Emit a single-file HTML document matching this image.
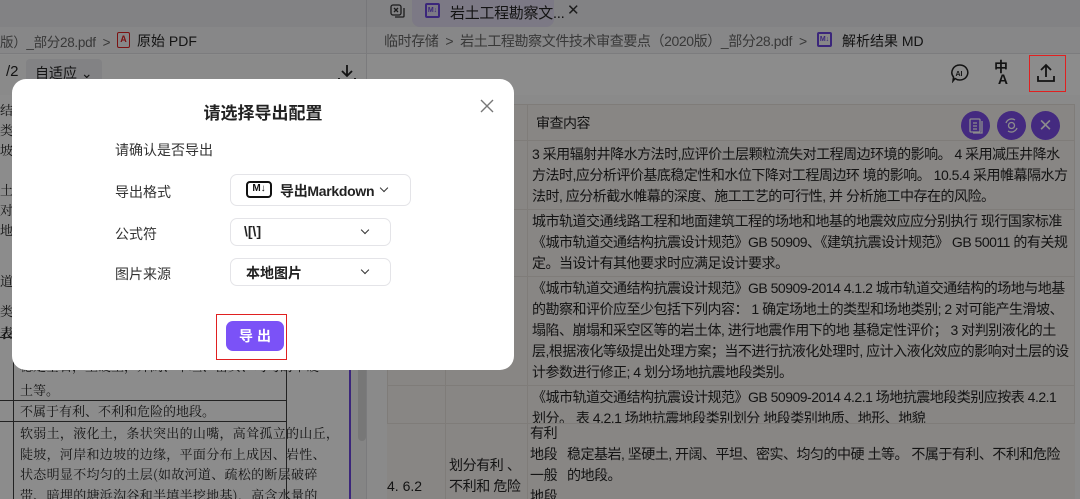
<!DOCTYPE html>
<html><head><meta charset="utf-8"><style>
*{margin:0;padding:0;box-sizing:border-box}
html,body{width:1080px;height:499px;overflow:hidden}
body{position:relative;font-family:"Liberation Sans","Noto Sans CJK SC",sans-serif;font-size:14px;color:#131313;background:#8c8c8c}
.a{position:absolute;white-space:nowrap}
.rt{position:absolute;left:387px;top:104px;width:688px;border-collapse:collapse;font-size:14px;line-height:21px;color:#131313;background:#888684;letter-spacing:-0.5px}
.rt td{border:1px solid #7f7c79;vertical-align:top;padding:1px 4px 2px}
.lp{font-family:"Noto Serif CJK SC","Liberation Serif",serif;font-size:13px;line-height:26px;color:#131313}
.sel{position:absolute;border:1px solid #e4e4e8;border-radius:7px;background:#fff}
.chev{position:absolute;width:6px;height:6px;border-right:1.3px solid #333;border-bottom:1.3px solid #333;transform:rotate(45deg)}
</style></head><body>
<div class="a" style="left:0;top:0;width:1080px;height:27px;background:#828284"></div>
<div class="a" style="left:366px;top:0;width:1px;height:27px;background:#77777a"></div>
<div class="a" style="left:412px;top:0;width:142px;height:27px;background:#7c7985;border-radius:0 0 8px 8px"></div>
<svg class="a" style="left:389px;top:3px" width="18" height="18" viewBox="0 0 18 18" fill="none" stroke="#1c1c1c" stroke-width="1.3"><rect x="2" y="2" width="10" height="10" rx="2"/><path d="M5 5l4 4M9 5l-4 4M6 14h8a1 1 0 0 0 1-1V5"/></svg>
<div class="a" style="left:425px;top:3px;width:15px;height:15px;border:2px solid #3b267b;border-radius:2px;font-size:7px;color:#3b267b;font-weight:bold;line-height:11px;text-align:center">M↓</div>
<div class="a" style="left:450px;top:2px;font-size:15px;color:#131313;letter-spacing:-0.3px">岩土工程勘察文...</div>
<div class="a" style="left:567px;top:1px;font-size:15px;color:#1c1c1c">✕</div>
<div class="a" style="left:0;top:27px;width:1080px;height:27px;background:#878788;border-bottom:1px solid #7c7c7e"></div>
<div class="a" style="left:0;top:31px;color:#383838;font-size:13.5px;letter-spacing:-0.3px">版）_部分28.pdf &nbsp;&gt;</div>
<div class="a" style="left:117px;top:32px;width:13px;height:16px;border:1.6px solid #7b1212;border-radius:2px;color:#7b1212;font-size:9px;line-height:13px;text-align:center;font-weight:bold">A</div>
<div class="a" style="left:137px;top:31px;color:#131313">原始 PDF</div>
<div class="a" style="left:366px;top:27px;width:1px;height:472px;background:#7b7b7d"></div>
<div class="a" style="left:384px;top:31px;color:#383838;letter-spacing:-0.4px">临时存储 &nbsp;&gt;&nbsp; 岩土工程勘察文件技术审查要点（2020版）_部分28.pdf &nbsp;&gt;</div>
<div class="a" style="left:817px;top:32px;width:15px;height:15px;border:2px solid #3b267b;border-radius:2px;font-size:7px;color:#3b267b;font-weight:bold;line-height:11px;text-align:center">M↓</div>
<div class="a" style="left:842px;top:31px;color:#131313">解析结果 MD</div>
<div class="a" style="left:0;top:55px;width:366px;height:40px;background:#8a8a8a"></div>
<div class="a" style="left:367px;top:55px;width:713px;height:40px;background:#8c8c8c"></div>
<div class="a" style="left:6px;top:63px;font-size:15px">/2</div>
<div class="a" style="left:26px;top:59px;width:76px;height:28px;background:#828284;border-radius:4px;padding:6px 9px;font-size:14px;line-height:16px">自适应 ⌄</div>
<svg class="a" style="left:336px;top:62px" width="22" height="22" viewBox="0 0 22 22" fill="none" stroke="#131313" stroke-width="1.8"><path d="M11 3v11M6 9l5 5 5-5M3 16v3h16v-3"/></svg>
<svg class="a" style="left:950px;top:63px" width="20" height="20" viewBox="0 0 20 20" fill="none" stroke="#131313" stroke-width="1.5"><path d="M10 2a8 7.5 0 1 1-5 13.5L3 18l.5-4A8 7.5 0 0 1 10 2z"/><text x="5.5" y="13" font-size="7" font-family="Liberation Sans" fill="#131313" stroke="none" font-weight="bold">AI</text></svg>
<div class="a" style="left:994px;top:61px;font-size:14px;font-weight:bold;line-height:12px">中<br>&nbsp;A</div>
<svg class="a" style="left:1035px;top:62px" width="22" height="22" viewBox="0 0 22 22" fill="none" stroke="#131313" stroke-width="1.8"><path d="M11 15V4M6 8l5-5 5 5M3 14v5h16v-5"/></svg>
<div class="a" style="left:1029px;top:55px;width:37px;height:37px;border:1.5px solid #e02020"></div>
<div class="a" style="left:0;top:95px;width:366px;height:404px;background:#858585"></div>
<div class="a" style="left:0;top:95px;width:350px;height:404px;background:#8c8c8c"></div>
<div class="a" style="left:349px;top:360px;width:2px;height:139px;background:#3b267b"></div>
<div class="a" style="left:358px;top:96px;width:8px;height:345px;background:#777;border-radius:4px"></div>
<div class="a lp" style="left:0;top:100px;line-height:20px">结<br>类<br>坡<br><br>土<br>对<br>地</div>
<div class="a lp" style="left:0;top:268px">道</div>
<div class="a lp" style="left:0;top:298px">类</div>
<div class="a lp" style="left:0;top:320px;font-weight:bold">表</div>
<div class="a" style="left:0;top:337px;width:286px;height:1px;background:#222"></div>
<div class="a" style="left:0;top:400px;width:286px;height:1px;background:#222"></div>
<div class="a" style="left:0;top:421px;width:286px;height:1px;background:#222"></div>
<div class="a" style="left:13px;top:337px;width:1px;height:162px;background:#222"></div>
<div class="a" style="left:286px;top:337px;width:1px;height:162px;background:#222"></div>
<div class="a lp" style="left:20px;top:354px;line-height:24px">稳定基岩，坚硬土，开阔、平坦、密实、均匀的中硬<br>土等。</div>
<div class="a lp" style="left:20px;top:400px;line-height:22px">不属于有利、不利和危险的地段。</div>
<div class="a lp" style="left:20px;top:423px;line-height:20.5px;letter-spacing:0.3px">软弱土，液化土，条状突出的山嘴，高耸孤立的山丘，<br>陡坡，河岸和边坡的边缘，平面分布上成因、岩性、<br>状态明显不均匀的土层(如故河道、疏松的断层破碎<br>带、暗埋的塘浜沟谷和半填半挖地基)，高含水量的</div>
<div class="a" style="left:367px;top:95px;width:713px;height:404px;background:#8a8a8a"></div>
<table class="rt">
<tr style="height:36px"><td style="width:58px"></td><td style="width:82px"></td><td style="padding-top:8px;padding-left:8px">审查内容</td></tr>
<tr><td></td><td></td><td style="padding-top:3px">3 采用辐射井降水方法时,应评价土层颗粒流失对工程周边环境的影响。 4 采用减压井降水方法时,应分析评价基底稳定性和水位下降对工程周边环 境的影响。 10.5.4 采用帷幕隔水方法时, 应分析截水帷幕的深度、施工工艺的可行性, 并 分析施工中存在的风险。</td></tr>
<tr><td></td><td></td><td>城市轨道交通线路工程和地面建筑工程的场地和地基的地震效应应分别执行 现行国家标准《城市轨道交通结构抗震设计规范》GB 50909、《建筑抗震设计规范》 GB 50011 的有关规定。当设计有其他要求时应满足设计要求。</td></tr>
<tr><td></td><td></td><td>《城市轨道交通结构抗震设计规范》GB 50909-2014 4.1.2 城市轨道交通结构的场地与地基的勘察和评价应至少包括下列内容： 1 确定场地土的类型和场地类别; 2 对可能产生滑坡、塌陷、崩塌和采空区等的岩土体, 进行地震作用下的地 基稳定性评价； 3 对判别液化的土层,根据液化等级提出处理方案；当不进行抗液化处理时, 应计入液化效应的影响对土层的设计参数进行修正; 4 划分场地抗震地段类别。</td></tr>
<tr><td></td><td></td><td>《城市轨道交通结构抗震设计规范》GB 50909-2014 4.2.1 场地抗震地段类别应按表 4.2.1 划分。 表 4.2.1 场地抗震地段类别划分 地段类别地质、地形、地貌</td></tr>
</table>
<div class="a" style="left:387px;top:423px;width:688px;height:76px;background:#888684;border-top:1px solid #7f7c79"></div>
<div class="a" style="left:445px;top:423px;width:1px;height:76px;background:#7f7c79"></div>
<div class="a" style="left:527px;top:423px;width:1px;height:76px;background:#7f7c79"></div>
<div class="a" style="left:387px;top:476px;line-height:21px">4. 6.2</div>
<div class="a" style="left:449px;top:455px;line-height:21px;letter-spacing:-0.4px">划分有利 、<br>不利和 危险</div>
<div class="a" style="left:530px;top:423px;line-height:21px;letter-spacing:-0.4px">有利<br>地段<br>一般<br>地段</div>
<div class="a" style="left:567px;top:444px;line-height:21px;letter-spacing:-0.5px">稳定基岩, 坚硬土, 开阔、平坦、密实、均匀的中硬 土等。 不属于有利、不利和危险<br>的地段。</div>
<div class="a" style="left:961px;top:111px;width:29px;height:29px;border-radius:50%;background:#442a80"></div>
<div class="a" style="left:997px;top:111px;width:29px;height:29px;border-radius:50%;background:#442a80"></div>
<div class="a" style="left:1031px;top:111px;width:29px;height:29px;border-radius:50%;background:#442a80;color:#8c8c8c;text-align:center;line-height:29px;font-size:17px">✕</div>
<svg class="a" style="left:968px;top:117px" width="16" height="18" viewBox="0 0 16 18" fill="none" stroke="#8c8c8c" stroke-width="1.3"><rect x="2" y="2" width="10" height="13" rx="1"/><path d="M5 6h4M5 9h4M5 12h4M14 4v12H5"/></svg>
<svg class="a" style="left:1003px;top:117px" width="17" height="17" viewBox="0 0 17 17" fill="none" stroke="#8c8c8c" stroke-width="1.3"><circle cx="8.5" cy="8.5" r="3"/><path d="M3 6a6 6 0 0 1 9-3M14 11a6 6 0 0 1-9 3"/></svg>

<div class="a" style="left:12px;top:79px;width:502px;height:291px;background:#fff;border-radius:14px"></div>
<div class="a" style="left:0;top:99px;width:526px;text-align:center;font-size:17px;font-weight:bold;color:#222">请选择导出配置</div>
<svg class="a" style="left:479px;top:98px" width="16" height="16" viewBox="0 0 16 16" stroke="#777" stroke-width="1.4"><path d="M2 2l12 12M14 2L2 14"/></svg>
<div class="a" style="left:115px;top:140px;color:#333">请确认是否导出</div>
<div class="a" style="left:115px;top:182px;color:#333">导出格式</div>
<div class="a" style="left:115px;top:224px;color:#333">公式符</div>
<div class="a" style="left:115px;top:264px;color:#333">图片来源</div>
<div class="sel" style="left:230px;top:174px;width:181px;height:32px"></div>
<div class="a" style="left:246px;top:181px;width:26px;height:17px;border:2.5px solid #111;border-radius:4px;font-size:10px;font-weight:bold;line-height:12px;text-align:center;color:#111">M↓</div>
<div class="a" style="left:280px;top:181px;font-weight:bold;color:#222;letter-spacing:-0.3px">导出Markdown</div>
<div class="chev" style="left:381px;top:185px"></div>
<div class="sel" style="left:230px;top:218px;width:161px;height:28px"></div>
<div class="a" style="left:244px;top:223px;font-weight:bold;color:#222">\[\]</div>
<div class="chev" style="left:362px;top:227px"></div>
<div class="sel" style="left:230px;top:258px;width:161px;height:28px"></div>
<div class="a" style="left:246px;top:263px;font-weight:bold;color:#222">本地图片</div>
<div class="chev" style="left:362px;top:267px"></div>
<div class="a" style="left:226px;top:321px;width:58px;height:30px;background:#7b52f7;border-radius:7px;color:#fff;font-weight:bold;text-align:center;line-height:30px;letter-spacing:4px;padding-left:4px">导出</div>
<div class="a" style="left:216px;top:314px;width:71px;height:46px;border:1.5px solid #e02020"></div>
</body></html>
